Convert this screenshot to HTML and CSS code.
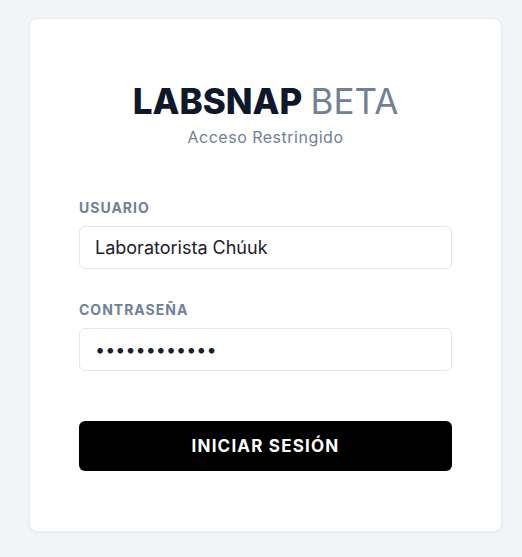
FILE: index.html
```html
<!DOCTYPE html>
<html lang="es">
<head>
<meta charset="utf-8">
<title>LabSnap Beta</title>
<link rel="stylesheet" href="styles.css">
</head>
<body>
<main class="page">
  <div class="card">
    <header class="brand">
      <h1 class="title"><span class="title-main">LABSNAP</span> <span class="title-sub">BETA</span></h1>
      <p class="subtitle">Acceso Restringido</p>
    </header>
    <form class="form">
      <div class="field">
        <label class="label" for="user">USUARIO</label>
        <input class="input" id="user" type="text" value="Laboratorista Chúuk">
      </div>
      <div class="field">
        <label class="label" for="pass">CONTRASEÑA</label>
        <input class="input input-pass" id="pass" type="password" value="123456789012">
      </div>
      <button class="button" type="button">INICIAR SESIÓN</button>
    </form>
  </div>
</main>
</body>
</html>
```
FILE: styles.css
```css
* { box-sizing: border-box; }
html, body { margin: 0; padding: 0; }
body {
  background: #f2f5f8;
  font-family: Inter, "Noto Sans", sans-serif;
  width: 522px;
  height: 557px;
}
.page {
  padding: 18px 20px 0 29px;
}
.card {
  width: 473px;
  height: 514px;
  background: #ffffff;
  border: 1px solid #e6ebf1;
  border-radius: 8px;
  box-shadow: 0 1px 3px rgba(15, 23, 42, 0.05);
  padding: 0 49px;
}
.brand {
  text-align: center;
  padding-top: 62px;
}
.title {
  margin: 0;
  font-size: 35px;
  line-height: 40px;
  letter-spacing: 0;
  font-weight: 700;
}
.title-main { color: #0f172a; font-weight: 800; }
.title-sub { color: #718096; font-weight: 400; }
.subtitle {
  margin: 6px 0 0;
  font-size: 16px;
  line-height: 20px;
  color: #718096;
  letter-spacing: 0.5px;
}
.form {
  margin-top: 52px;
  display: flex;
  flex-direction: column;
}
.field {
  display: flex;
  flex-direction: column;
  margin-bottom: 32px;
}
.label {
  font-size: 14px;
  line-height: 18px;
  font-weight: 700;
  color: #718096;
  letter-spacing: 1px;
  margin-bottom: 9px;
}
.input {
  height: 43px;
  border: 1px solid #e2e8f0;
  border-radius: 6px;
  padding: 0 15px;
  font-family: Inter, "Noto Sans", sans-serif;
  font-size: 18px;
  color: #1a202c;
  background: #fff;
  outline: none;
}
.input-pass {
  letter-spacing: 0;
}
.button {
  margin-top: 18px;
  height: 50px;
  background: #000;
  color: #fff;
  border: none;
  border-radius: 6px;
  font-family: Inter, "Noto Sans", sans-serif;
  font-size: 17px;
  font-weight: 700;
  letter-spacing: 1.2px;
}
```
